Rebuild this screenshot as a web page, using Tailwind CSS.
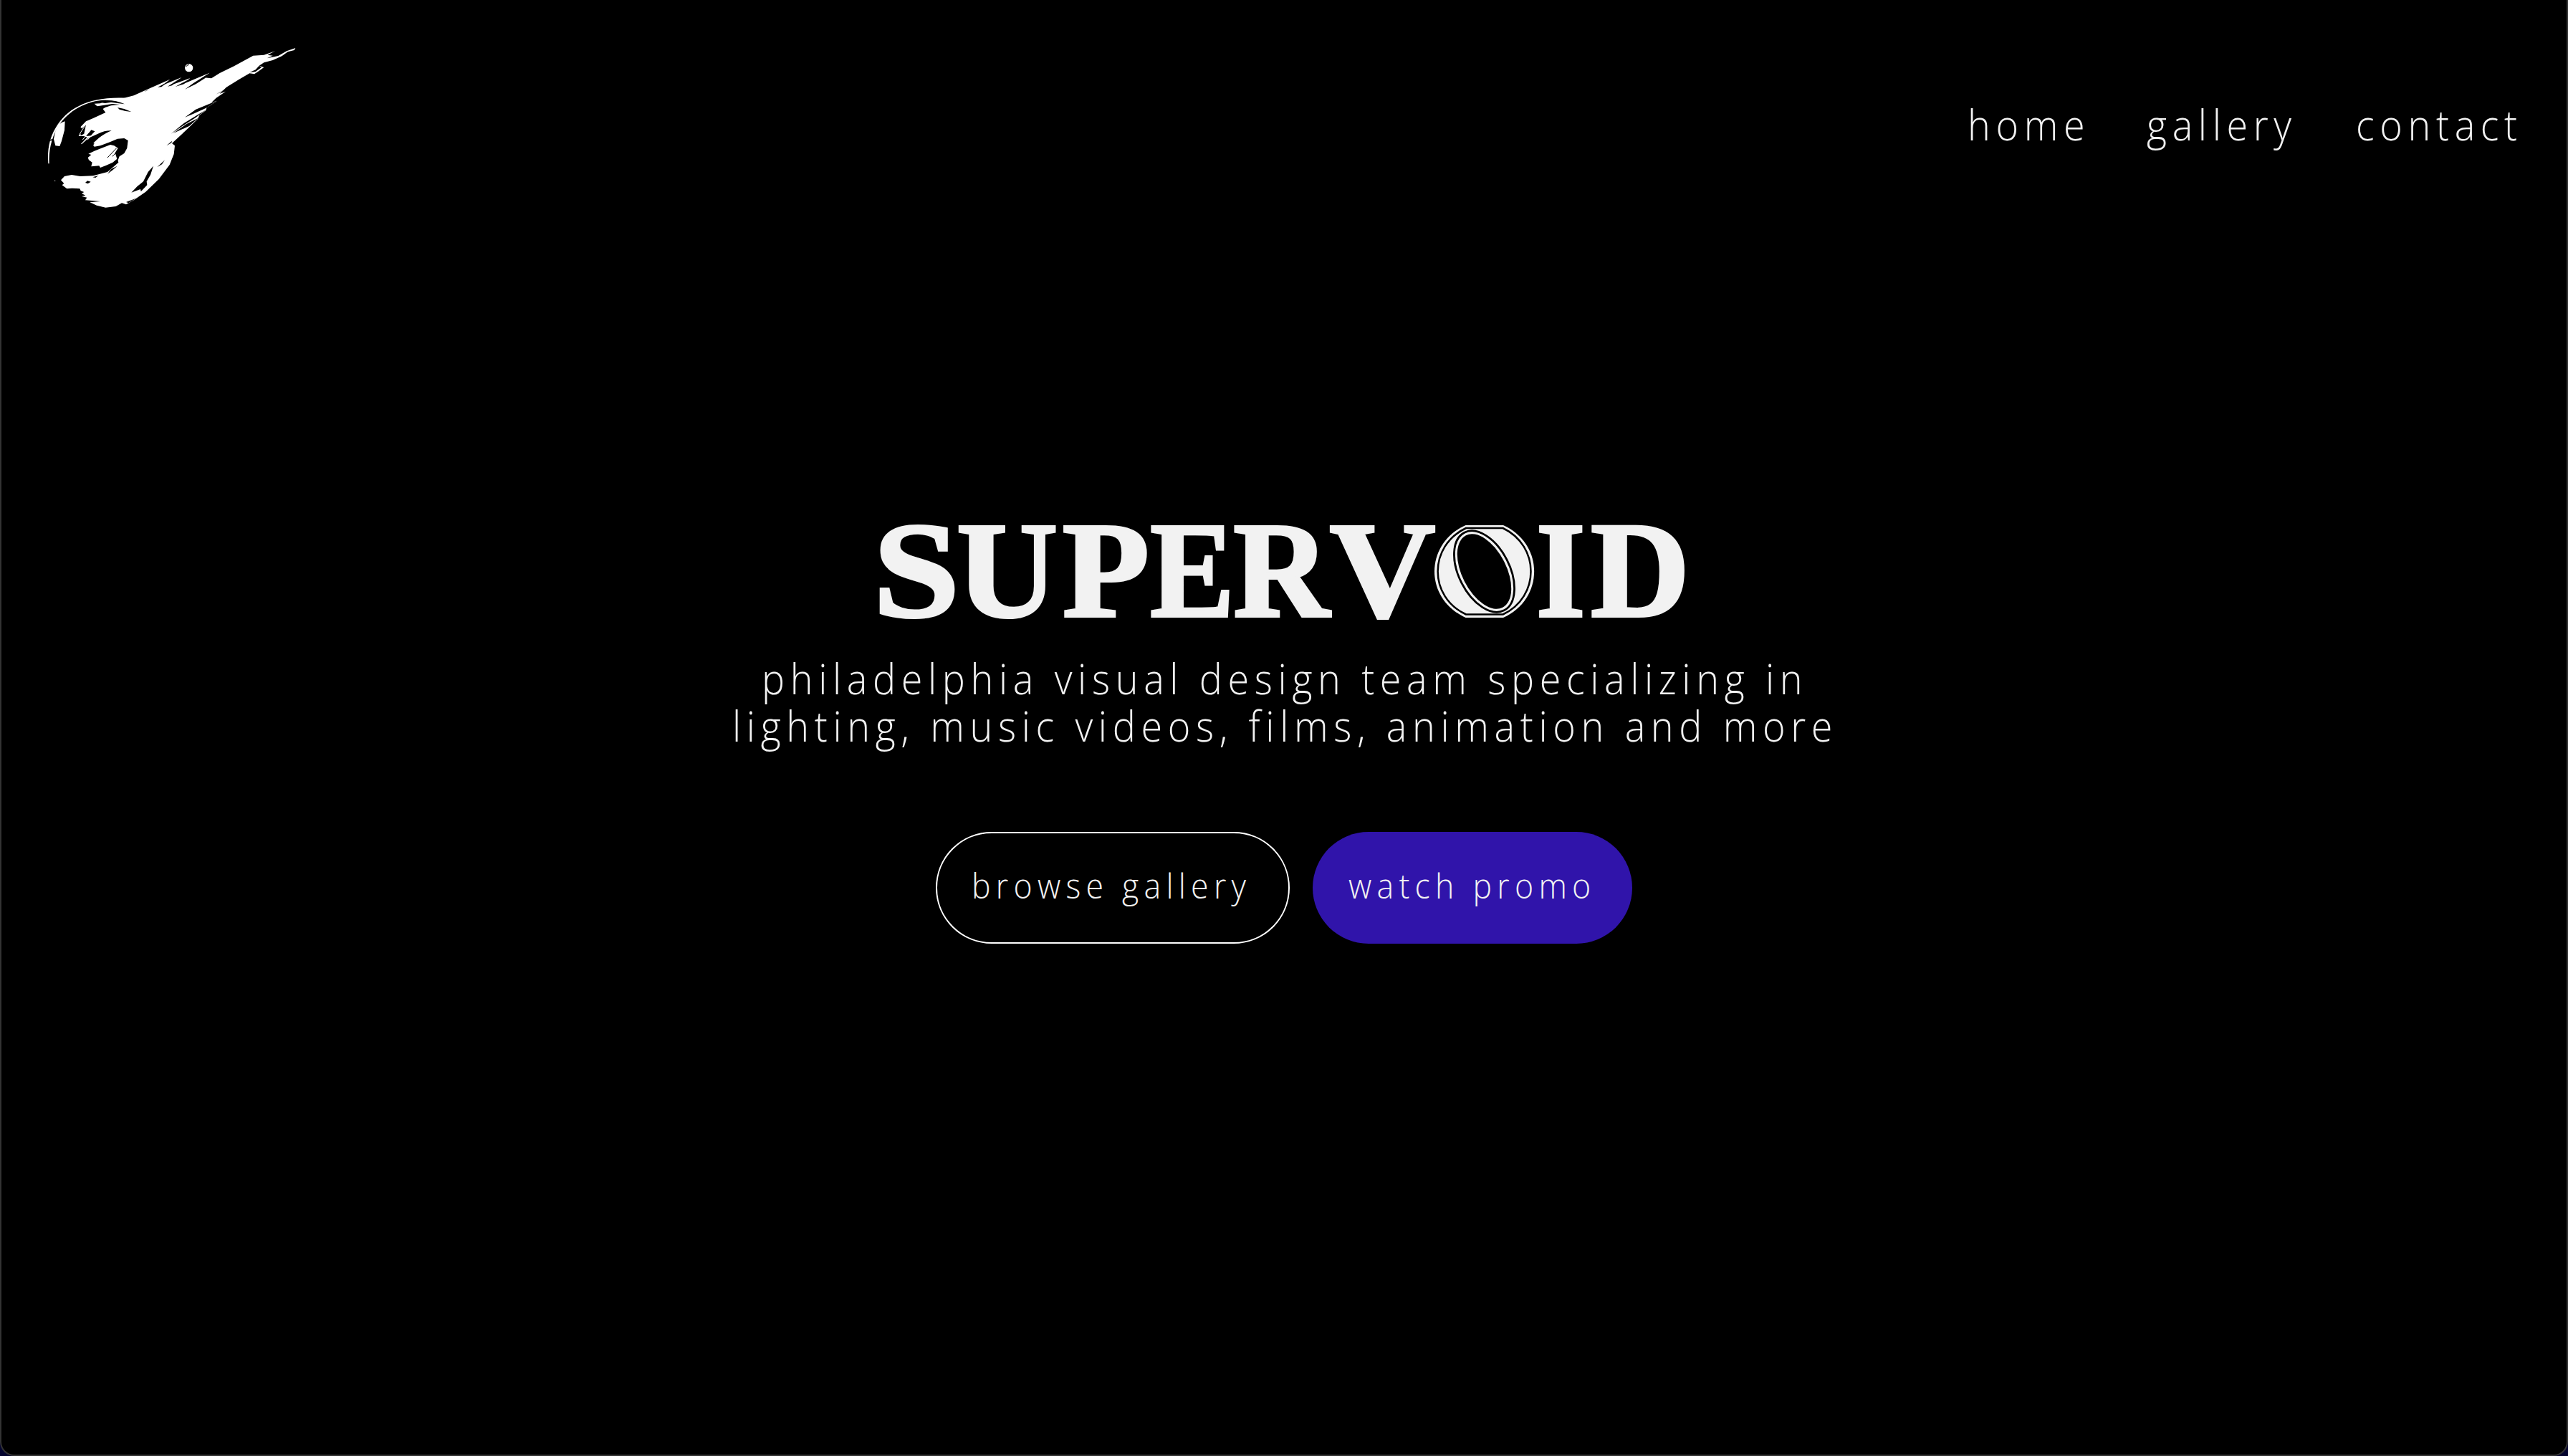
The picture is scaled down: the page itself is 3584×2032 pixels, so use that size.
<!DOCTYPE html>
<html lang="en">
<head>
<meta charset="utf-8">
<title>Supervoid</title>
<script src="https://cdn.jsdelivr.net/npm/@tailwindcss/browser@4"></script>
</head>
<body class="bg-[#04042e] overflow-hidden">
<div class="w-[3584px] h-[2032px] bg-black border-x-2 border-b-2 border-[#333333] rounded-b-[20px] text-[#f2f2f2] font-['Open_Sans',sans-serif] font-light overflow-hidden">

  <header class="flex items-start justify-between pl-[38px] pt-10 h-[330px]">
    <svg class="w-[400px] h-[270px] shrink-0" viewBox="0 0 1200 810" role="img" aria-label="Supervoid comet">
      <!-- comet body and tail -->
      <path fill="#fff" d="M400 290L440 280L490 257L592 212L560 237L640 204L600 235L676 207L650 230L757 185L735 205L765 208L800 186L860 157L940 113L985 110L1032 94L1000 110L1022 113L998 124L1045 114L1080 94L1117 81L1112 90L1085 97L1060 115L1022 132L985 142L965 155L985 162L960 180L945 190L925 187L880 213L828 245L800 272L825 263L785 290L765 310L788 302L745 332L742 342L715 362L708 378L670 415L600 480L612 490L608 525L590 570L545 630L490 683L440 718L408 736L390 730L365 744L322 749L285 740L256 727L300 723L237 718L244 707L222 702L238 698L222 690L232 684L218 679L214 670L182 668L160 670L140 655L148 648L135 634L150 618L180 612L215 618L270 616L330 600L376 560L370 540L395 480L340 485L285 500L268 493L275 480L218 484L245 455L232 450L209 450L225 420L217 412L240 388L270 375L322 351L310 335L290 328L275 314L300 313L322 303Z"/>
      <!-- rim of the planet -->
      <path fill="#fff" d="M405 290C250 283 160 335 115 412C85 460 78 510 82 565L86 565C84 515 92 465 122 412C165 342 245 300 322 299L400 316Z"/>
      <path fill="#fff" d="M140 392L152 388L150 425L138 470L130 492L112 490L105 462L112 430L125 402Z"/>
      <!-- dark face and streaks -->
      <g fill="#000">
        <path d="M290 304C325 296 370 300 402 316L372 312L345 308L320 312L300 309Z"/>
        <path d="M278 326L350 315L382 318L345 322L320 330L305 340Z"/>
        <path d="M372 330L400 336L430 348L405 345L380 338Z"/>
        <path d="M222 484L250 458L290 440C310 430 330 426 347 427C320 438 290 456 266 486Z"/>
        <path d="M215 425L240 402L232 440L218 448ZM240 450L262 424L278 430L262 448Z"/>
        <path d="M222 484L266 483L275 494L300 490L340 475L372 461L400 459L416 468L412 500L400 522L380 535L372 556L340 584L300 600L215 610L150 612L95 600L100 500Z"/>
        <path d="M485 264L510 252L490 260ZM540 245L585 222L556 244ZM582 242L635 208L600 238ZM614 243L675 210L650 232ZM654 254L690 228L755 187L738 208L700 232Z"/>
        <path d="M654 371L700 338L787 302L748 330L690 356ZM596 440L650 396L742 340L700 372L640 410ZM605 438L660 400L710 374L672 408ZM784 275L825 252L800 268ZM925 183L950 172L965 155L975 162L950 180Z"/>
        <path d="M577 490L600 470L598 478ZM330 608L345 588L371 575L352 592ZM538 580L570 550L558 568ZM298 600L326 594L304 604ZM268 622L292 615L280 624ZM237 645L246 637L260 641L248 649Z"/>
        <path d="M430 686L455 660L480 640L500 600L522 575L510 612L494 640L496 655L470 682L468 672ZM408 726L450 710L418 730Z"/>
      </g>
      <path fill="#fff" d="M248 540L262 528L250 524L275 512L305 500L342 486L358 490L374 500L362 520L370 545L352 560L325 572L300 582L295 574L262 577L266 560L252 550Z"/>
      <path d="M330 540L368 500M350 535L374 512" stroke="#000" stroke-width="3" fill="none"/>
      <path d="M214 440L240 400M226 465L268 414M246 466L280 428" stroke="#fff" stroke-width="3" fill="none"/>
      <path d="M86 468L104 464" stroke="#000" stroke-width="5" fill="none"/>
      <!-- moon -->
      <circle cx="671" cy="164" r="17" fill="#fff"/>
      <path d="M658 160Q662 152 672 151" stroke="#000" stroke-width="3" fill="none"/>
      <circle cx="110" cy="637" r="2" fill="#fff"/>
    </svg>

    <nav class="flex pt-[101px] pr-[62px] text-[58px] leading-[66px] tracking-[8.2px] whitespace-nowrap">
      <a class="w-[250px]"><span class="inline-block origin-left scale-x-[0.93]">home</span></a>
      <a class="w-[292px]"><span class="inline-block origin-left scale-x-[0.93]">gallery</span></a>
      <a class="w-[232px]"><span class="inline-block origin-left scale-x-[0.93]">contact</span></a>
    </nav>
  </header>

  <main class="flex flex-col items-center pt-[358px]">
    <h1 class="w-[1150px] h-[216px] -ml-[14px]">
      <svg class="w-[1150px] h-[216px]" viewBox="1210 688 1150 216" font-family="Liberation Serif, serif" font-weight="700" font-size="190" fill="#f2f2f2">
        <g stroke="#f2f2f2" stroke-width="4">
          <text x="1218.4" y="860" textLength="120.7" lengthAdjust="spacingAndGlyphs">S</text>
          <text x="1334.9" y="860" textLength="141.2" lengthAdjust="spacingAndGlyphs">U</text>
          <text x="1482.8" y="860" textLength="121.4" lengthAdjust="spacingAndGlyphs">P</text>
          <text x="1605.2" y="860" textLength="117.4" lengthAdjust="spacingAndGlyphs">E</text>
          <text x="1721.2" y="860" textLength="134.1" lengthAdjust="spacingAndGlyphs">R</text>
          <text x="1855.7" y="860" textLength="147.6" lengthAdjust="spacingAndGlyphs">V</text>
          <text x="2004" y="860" textLength="135" lengthAdjust="spacingAndGlyphs">O</text>
          <text x="2144" y="860" textLength="68.4" lengthAdjust="spacingAndGlyphs">I</text>
          <text x="2220" y="860" textLength="138.1" lengthAdjust="spacingAndGlyphs">D</text>
        </g>
        <!-- ring over the O -->
        <ellipse cx="2071.500" cy="797.500" rx="70" ry="68" fill="#000"/>
        <path d="M2045.500 733H2098C2155.500 759 2155.500 836 2098 862H2045.500C1987.500 836 1987.500 759 2045.500 733Z"/>
        <path fill="none" stroke="#000" stroke-width="2.500" d="M2046 737H2097.500C2149.500 762 2149.500 833 2097.500 857.500H2046C1993.500 833 1993.500 762 2046 737Z"/>
        <ellipse cx="2071.500" cy="797.500" rx="35.500" ry="61" transform="rotate(-27 2071.500 797.500)" stroke="#000" stroke-width="2.800"/>
        <ellipse cx="2071.500" cy="797.500" rx="31" ry="56.500" transform="rotate(-27 2071.500 797.500)" fill="#000"/>
      </svg>
    </h1>

    <div class="mt-[10px] w-[1540px] text-[58px] leading-[66px] tracking-[8.2px] whitespace-nowrap">
      <p class="pl-[41px]"><span class="inline-block origin-left scale-x-[0.93]">philadelphia visual design team specializing in</span></p>
      <p><span class="inline-block origin-left scale-x-[0.93]">lighting, music videos, films, animation and more</span></p>
    </div>

    <div class="mt-[115px] flex gap-8 text-[48px] leading-[66px] tracking-[7.8px] whitespace-nowrap">
      <a class="w-[494px] h-[156px] rounded-full border-2 border-white pl-[48px] pt-[40px]"><span class="inline-block origin-left scale-x-[0.93]">browse gallery</span></a>
      <a class="w-[446px] h-[156px] rounded-full bg-[#3014aa] pl-[50px] pt-[42px]"><span class="inline-block origin-left scale-x-[0.93]">watch promo</span></a>
    </div>
  </main>
</div>
</body>
</html>
